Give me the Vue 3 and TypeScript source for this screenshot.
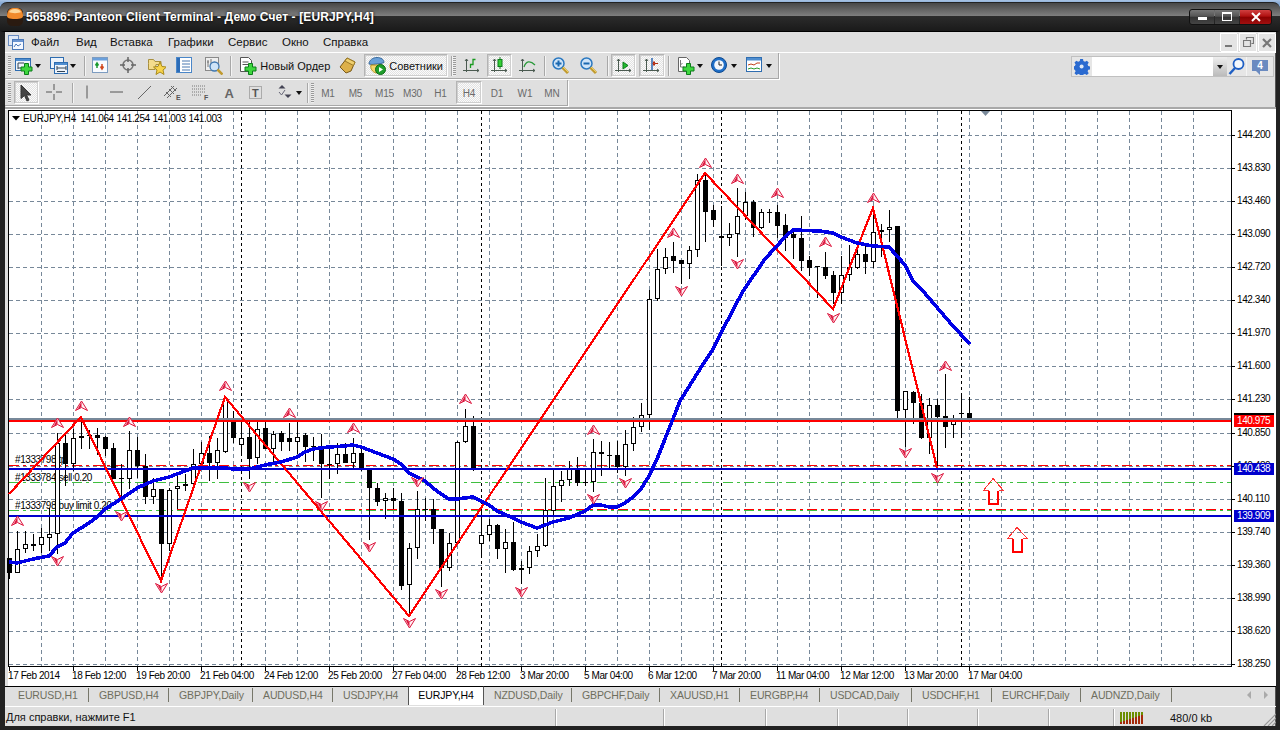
<script setup lang="ts">
type Item = { w: number; kind: 'sp' | 'sep' | 'grip' | 'btn'; icon?: string; arrow?: boolean; pressed?: boolean; text?: string; tf?: boolean; iw?: number }
const sp = (w: number): Item => ({ w, kind: 'sp' })
const SEP: Item = { w: 2, kind: 'sep' }
const GRIP: Item = { w: 3, kind: 'grip' }
const b = (w: number, icon: string, o: Partial<Item> = {}): Item => ({ w, kind: 'btn', icon, ...o })
const tf = (w: number, text: string, pressed = false): Item => ({ w, kind: 'btn', text, tf: true, pressed })

const plus = (x: number, y: number) => `<path d="M${x + 3.5} ${y + .5}h4v3.500h3.500v4h-3.500v3.500h-4v-3.500h-3.500v-4h3.500z" fill="#3ed63e" stroke="#0b7d1a"/>`
const axes = (c = '#4a5a50') => `<path d="M3.500 2v13M0 13.500h16M2 4l1.500-2 1.500 2M14 12l2 1.500-2 1.500" fill="none" stroke="${c}"/>`
const glass = (s: string) => `<circle cx="6.500" cy="6.500" r="5.500" fill="#cfe4f8" stroke="#2a78c0" stroke-width="1.500"/>${s}<path d="M10.500 10.500l5.500 5.500" stroke="#c09a30" stroke-width="3"/><path d="M11 10l5 5" stroke="#f0d060" stroke-width="1"/>`
const win = `<rect x=".5" y="1.500" width="15" height="12" fill="#eef4fb" stroke="#2f6db0"/><rect x="1" y="2" width="14" height="2" fill="#4f8ed0"/>`
const letter = (t: string, x: number, y: number, s: number, c = '#555', w = 700) => `<text x="${x}" y="${y}" font-family="Liberation Sans, Arial, sans-serif" font-size="${s}" font-weight="${w}" fill="${c}">${t}</text>`
const icons: Record<string, string> = {
  newchart: `${win}<path d="M3 6h6M3 6v6M3 11h7" fill="none" stroke="#345"/>${plus(6, 6)}`,
  profile: `<rect x=".5" y=".5" width="13" height="11" fill="#eef4fb" stroke="#2f6db0"/><rect x="4.500" y="5.500" width="13" height="11" fill="#eef4fb" stroke="#2f6db0"/><rect x="5" y="6" width="12" height="2" fill="#4f8ed0"/><path d="M7 11h9M7 9v4M16 9v4M7 14.500h8" fill="none" stroke="#345"/>`,
  market: `<rect x=".5" y=".5" width="15" height="15" fill="#f8fbff" stroke="#7d9cc0"/><rect x="1" y="1" width="14" height="2.500" fill="#6aa0dc"/><path d="M5 11V7M3.500 8.500L5 6l1.500 2.500" fill="none" stroke="#1a9a30" stroke-width="1.500"/><path d="M10 7v4M8.500 9.500L10 12l1.500-2.500" fill="none" stroke="#d04a20" stroke-width="1.500"/>`,
  nav: `<circle cx="8" cy="8" r="5" fill="none" stroke="#757575" stroke-width="1.500"/><path d="M8 0v5M8 11v5M0 8h5M11 8h5" stroke="#666" stroke-width="1.500"/>`,
  folder: `<path d="M.5 6.500v-4h5l1.500 2h6v3h-5l-1 5H.5z" fill="#f4dc8c" stroke="#a89040"/><path d="M12 5l2 4.500 4.500.5-3.500 3 1 4.500-4-2.500-4 2.500 1-4.500-3.500-3 4.500-.5z" fill="#f8d44c" stroke="#a88a1c"/>`,
  term: `<rect x=".5" y=".5" width="15" height="15" fill="#fff" stroke="#4a86c8"/><rect x="1" y="1" width="3" height="14" fill="#2b6cb8"/><path d="M6 4h8M6 7h8M6 10h8M6 13h8" stroke="#4a78b0"/>`,
  tester: `<rect x=".5" y=".5" width="13" height="13" fill="#efefef" stroke="#8a8a8a"/><path d="M3 3v7M2 5h2M6 2v6" stroke="#777"/><circle cx="9.500" cy="9.500" r="4.500" fill="#cfe4f8" stroke="#4078b0" stroke-width="1.300"/><path d="M12.500 12.500l5 5" stroke="#c09a30" stroke-width="2.500"/>`,
  order: `<path d="M1.500.5h8l3 3v11h-11z" fill="#fff" stroke="#555"/><path d="M3.500 5h6M3.500 7.500h6" stroke="#555"/>${plus(6, 6)}`,
  book: `<path d="M1 10L8 1l8 4-4 9-5 2z" fill="#dcb04a" stroke="#7a5a18"/><path d="M8 1l8 4-1.500 3.500L6 4z" fill="#f0d070" stroke="#9a7a28"/>`,
  sov: `<path d="M1 7c0-4 4-6.500 8-6.500s7 2 7 5l-3 1-9 1z" fill="#6aa0d8" stroke="#3a6a9c"/><path d="M3 8c-1 3 1 7 5 8l4-1 1-7z" fill="#f4d66a" stroke="#b09020"/><circle cx="12.500" cy="12.500" r="5" fill="#1f9e2c" stroke="#0c6a14"/><path d="M11 10v5l4-2.500z" fill="#fff"/>`,
  bar: `${axes()}<path d="M7.500 11V7.500H10V2.500h2.500" fill="none" stroke="#1a9a20" stroke-width="1.300"/>`,
  candle: `${axes()}<path d="M9 0v12" stroke="#1a7a20"/><rect x="7" y="2.500" width="4" height="7" fill="#35d035" stroke="#0b7d1a"/>`,
  line: `${axes()}<path d="M5 10c2-6 6-7 11-2" fill="none" stroke="#2a9a3a" stroke-width="1.300"/>`,
  zin: glass('<path d="M3.500 6.500h6M6.500 3.500v6" stroke="#1a68b0" stroke-width="2"/>'),
  zout: glass('<path d="M3.500 6.500h6" stroke="#1a68b0" stroke-width="2"/>'),
  scroll: `${axes()}<path d="M8 5v7l5-3.500z" fill="#22bb30" stroke="#0b7d1a"/>`,
  shift: `${axes()}<path d="M9 1v12" stroke="#2a64b0" stroke-width="1.500"/><path d="M15 6.500h-3l-1-2-1 2 1 2 1-2" fill="#d03a14" stroke="#b02a10"/>`,
  tmpl: `<path d="M1.500.5h8l3 3v11h-11z" fill="#fff" stroke="#666"/><path d="M3.500 3v7h4M3.500 8l2-2" fill="none" stroke="#777"/>${plus(6, 6)}`,
  clock: `<circle cx="8" cy="8" r="7.500" fill="#1f6fc8" stroke="#0f4a90"/><circle cx="8" cy="8" r="4.800" fill="#f4f8fc"/><path d="M8 4.500V8h3" fill="none" stroke="#222"/>`,
  ind: `<rect x=".5" y=".5" width="15" height="14" fill="#fff" stroke="#2f6db0"/><rect x="1" y="1" width="14" height="2.500" fill="#4f8ed0"/><path d="M2 8l3-1 3 1 3-2 3 0" fill="none" stroke="#c04018"/><path d="M2 12l3-1 3 1 3-1 3 1" fill="none" stroke="#2a9a2a"/>`,
  cursor: `<path d="M3 1v13.500l3.500-3 2.500 5.500 2-1-2.500-5h4.500z" fill="#444" stroke="#333"/>`,
  cross: `<path d="M8 0v6M8 10v6M0 8h6M10 8h6" stroke="#555"/>`,
  vline: `<path d="M8 1.500v13" stroke="#555"/>`,
  hline: `<path d="M2 8h13" stroke="#555"/>`,
  trend: `<path d="M2 15L15 2" stroke="#666"/>`,
  chan: `<path d="M0 12L10 2M3 14L13 4M2 8l5 5M5 5l5 5M7 2l5 5" stroke="#666"/>${letter('E', 12, 16, 7)}`,
  fibo: `<path d="M0 2h13M0 5h13M0 8h13M0 11h10" stroke="#777" stroke-dasharray="1 1"/>${letter('F', 12, 16, 7)}`,
  tbox: `<rect x="1.500" y="2.500" width="12" height="12" fill="none" stroke="#777" stroke-dasharray="1 1"/>${letter('T', 4, 13, 11)}`,
  atext: letter('A', 4.500, 14, 13, '#666'),
  arrows: `<path d="M6 1l3.500 3.500H2.500z" fill="#445"/><path d="M12 14l3.500-3.500h-7z" fill="#445"/><path d="M3 8l2.500 3L9 6" fill="none" stroke="#667"/>`,
}

const tb1: Item[] = [
  sp(3), GRIP, sp(3), b(29, 'newchart', { arrow: true }), b(41, 'profile', { arrow: true }), SEP,
  b(31, 'market'), b(25, 'nav'), b(30, 'folder'), b(26, 'term'), b(32, 'tester'), SEP,
  b(106, 'order', { text: 'Новый Ордер' }), b(20, 'book'), sp(6), b(84, 'sov', { text: 'Советники', pressed: true }), sp(3), SEP, sp(1), GRIP, sp(1),
  b(30, 'bar'), b(25, 'candle', { pressed: true }), b(32, 'line'), SEP, b(30, 'zin'), b(26, 'zout'), sp(5), SEP, sp(2),
  b(25, 'scroll', { pressed: true }), sp(3), b(26, 'shift', { pressed: true }), sp(3), SEP,
  b(39, 'tmpl', { arrow: true }), b(30, 'clock', { arrow: true }), b(39, 'ind', { arrow: true }),
]
const tb2: Item[] = [
  sp(3), GRIP, sp(3), b(25, 'cursor', { pressed: true }), b(31, 'cross'), sp(2), SEP,
  b(28, 'vline'), b(30, 'hline'), b(26, 'trend'), b(29, 'chan'), b(27, 'fibo'),
  b(29, 'atext'), b(28, 'tbox'), b(36, 'arrows', { arrow: true }), SEP, sp(2), GRIP,
  tf(28, 'M1'), tf(27, 'M5'), tf(31, 'M15'), tf(25, 'M30'), tf(31, 'H1'), tf(26, 'H4', true), tf(30, 'D1'), tf(26, 'W1'), tf(28, 'MN'),
]
const menu = [['Файл', 45], ['Вид', 34], ['Вставка', 58], ['Графики', 60], ['Сервис', 54], ['Окно', 41], ['Справка', 60]] as [string, number][]
const tabs: [string, number, boolean?][] = [
  ['EURUSD,H1', 81], ['GBPUSD,H4', 80], ['GBPJPY,Daily', 84], ['AUDUSD,H4', 80], ['USDJPY,H4', 76], ['EURJPY,H4', 76, true],
  ['NZDUSD,Daily', 88], ['GBPCHF,Daily', 88], ['XAUUSD,H1', 80], ['EURGBP,H4', 80], ['USDCAD,Daily', 92], ['USDCHF,H1', 80], ['EURCHF,Daily', 89], ['AUDNZD,Daily', 91],
]
const statusCells = [550, 108, 102, 72, 70, 70, 71, 65]

const raw: number[][] = [
  [557,578,557,572,0],[530,572,548,572,1],[530,552,543,548,1],[533,550,543,545,0],[527,552,536,544,1],[507,550,533,537,1],[432,553,442,533,1],[433,485,442,463,0],
  [428,470,437,463,1],[415,448,435,437,1],[429,448,434,435,0],[427,454,434,437,0],[435,455,436,448,0],[442,478,447,478,0],[463,495,477,478,0],[430,488,449,478,1],
  [436,477,449,465,0],[453,503,465,496,0],[477,503,488,496,1],[488,580,488,543,0],[487,550,489,543,1],[473,508,485,488,1],[473,490,483,485,1],[448,483,463,483,1],
  [441,468,452,463,1],[435,480,452,462,0],[437,478,449,462,1],[396,452,397,451,1],[410,442,421,437,0],[414,453,437,444,1],[420,478,436,458,0],[421,463,428,457,1],
  [420,448,427,448,0],[430,462,433,448,1],[430,450,432,441,0],[422,450,437,441,0],[420,453,436,441,1],[432,461,434,446,0],[436,460,445,446,0],[433,497,447,463,0],
  [445,478,463,464,0],[442,473,453,463,1],[442,462,453,462,0],[437,467,452,462,1],[445,470,452,469,0],[469,539,469,487,0],[482,505,487,501,0],[492,518,497,500,1],
  [487,508,497,500,0],[492,589,500,585,0],[542,615,547,584,1],[490,558,508,547,1],[497,520,508,509,0],[498,543,508,528,0],[528,586,528,567,0],[532,570,542,567,1],
  [440,543,441,542,1],[408,442,425,441,1],[415,470,425,469,0],[505,556,534,543,1],[518,540,524,534,1],[523,558,524,548,0],[528,572,541,548,1],[521,570,541,569,0],
  [560,583,567,569,1],[545,573,550,567,1],[533,556,545,550,1],[477,546,509,545,1],[468,514,485,510,1],[470,501,479,485,1],[460,485,468,479,1],[456,485,468,482,0],
  [468,485,481,482,0],[438,491,451,481,1],[440,475,451,453,0],[441,467,454,455,0],[440,472,454,466,0],[429,475,443,466,1],[416,450,426,443,1],[402,431,414,426,1],
  [289,429,298,414,1],[248,300,268,298,1],[247,273,256,268,1],[241,272,255,260,0],[259,283,259,263,0],[245,278,249,263,1],[173,256,179,249,1],[172,241,179,211,0],
  [204,226,209,219,0],[205,265,235,237,0],[222,245,233,237,1],[187,256,215,233,1],[191,219,201,215,1],[199,236,201,227,0],[208,228,211,227,1],[208,222,211,212,0],
  [204,237,211,225,0],[213,250,224,237,0],[228,258,233,237,0],[215,270,237,260,0],[255,275,259,267,0],[265,297,265,266,0],[251,278,266,275,0],[270,303,274,292,0],
  [255,303,274,292,1],[244,280,266,274,1],[242,268,253,267,1],[242,273,253,261,0],[208,267,231,261,1],[223,256,229,231,1],[209,241,226,229,1],[225,418,225,410,0],
  [390,446,390,409,1],[390,423,391,402,0],[393,438,402,437,0],[397,453,404,437,1],[398,467,404,416,0],[373,447,415,426,0],[414,437,419,424,1],[395,436,412,413,0],[396,419,412,419,0],
]
const candles = raw.map((r, i) => ({ x: 9 + 8 * i, h: r[0], l: r[1], t: r[2], b: r[3], up: r[4] === 1 }))

const xsV = Array.from({ length: 37 }, (_, i) => 41 + 32 * i)
const seps = [241, 481, 721, 961]
const prices = ['144.200', '143.830', '143.460', '143.090', '142.720', '142.340', '141.970', '141.600', '141.230', '140.850', '140.480', '140.110', '139.740', '139.360', '138.990', '138.620', '138.250']
const ysH = prices.map((p, i) => ({ p, y: Math.round(134 + 33.06 * i) }))
const dates = ['17 Feb 2014', '18 Feb 12:00', '19 Feb 20:00', '21 Feb 04:00', '24 Feb 12:00', '25 Feb 20:00', '27 Feb 04:00', '28 Feb 12:00', '3 Mar 20:00', '5 Mar 04:00', '6 Mar 12:00', '7 Mar 20:00', '11 Mar 04:00', '12 Mar 12:00', '13 Mar 20:00', '17 Mar 04:00']
const zig = '9,493 81,416 161,580 225,396 409,615 705,172 833,308 873,207 937,467'
const ma = '9,561 17,562 25,560 33,558 49,555 57,546 65,542 73,532 89,522 97,516 105,508 121,498 137,487 153,480 169,476 185,470 193,467 209,467 225,467 233,468 249,468 265,464 281,461 297,456 305,451 313,448 329,446 345,445 353,444 361,446 369,449 393,458 401,463 409,472 425,480 433,487 441,493 449,498 457,498 473,496 481,500 489,504 497,510 513,517 521,521 537,527 545,524 553,521 569,517 585,510 593,504 601,504 609,506 617,506 625,502 633,496 641,488 649,475 657,458 665,438 680,400 700,368 712,350 722,330 743,290 765,258 775,247 786,235 793,229 820,230 833,232 841,236 849,239 857,242 873,245 889,246 897,255 905,264 913,280 923,290 940,310 953,325 970,343'
const ups = [[17,520],[57,422],[81,405],[129,421],[225,385],[289,412],[353,427],[465,398],[593,429],[673,232],[705,162],[737,178],[777,192],[825,241],[873,197],[945,365]]
const downs = [[57,560],[121,515],[161,587],[249,486],[321,505],[369,546],[417,481],[441,593],[409,622],[521,591],[593,498],[625,482],[681,290],[737,263],[833,317],[905,452],[937,477]]
const bars = Array.from({ length: 8 }, (_, i) => i)
</script>

<template>
  <div class="win">
    <header class="title">
      <svg class="appicon" width="16" height="18" viewBox="0 0 16 18">
        <rect x="0" y="0" width="16" height="18" rx="5" fill="#2a1a10" />
        <path d="M0 8c0-4 2-8 6-8h4c4 0 6 4 6 8 0 2-2 3-8 3s-8-1-8-3z" fill="#f08a2c" />
        <path d="M2 4c1-2 3-3 6-3s5 1 6 3c-2 1.500-10 1.500-12 0z" fill="#fcd69a" />
      </svg>
      <span class="ttext">565896: Panteon Client Terminal - Демо Счет - [EURJPY,H4]</span>
      <div class="caps">
        <span class="cap"><i class="cmin"></i></span>
        <span class="cap"><i class="cmax"></i></span>
        <span class="cap cclose">
          <svg width="12" height="10" viewBox="0 0 12 10"><path d="M2 1l8 8M10 1L2 9" stroke="#fff" stroke-width="2" /></svg>
        </span>
      </div>
    </header>

    <div class="client">
      <nav class="menu">
        <svg class="mdi" width="16" height="15" viewBox="0 0 16 15">
          <rect x=".5" y=".5" width="10" height="10" fill="#dfe9f7" stroke="#6a8cc0" />
          <rect x="4.500" y="4.500" width="11" height="10" fill="#f4f8ff" stroke="#4a78b8" />
          <rect x="5" y="5" width="10" height="2" fill="#6a94d0" />
          <path d="M6 12l2-3 2 2 3-2" fill="none" stroke="#4a78b8" />
        </svg>
        <span v-for="m in menu" :key="m[0]" class="mi" :style="{ width: m[1] + 'px' }">{{ m[0] }}</span>
        <div class="mdibtns">
          <span class="mb"><svg width="10" height="10" viewBox="0 0 10 10"><path d="M1 8h7" stroke="#777" stroke-width="2" /></svg></span>
          <span class="mb"><svg width="11" height="11" viewBox="0 0 11 11"><path d="M3.500 2.500v-2h7v6h-2M.5 3.500h7v6h-7z" fill="none" stroke="#777" stroke-width="1.200" /></svg></span>
          <span class="mb"><svg width="10" height="10" viewBox="0 0 10 10"><path d="M1 1l8 8M9 1L1 9" stroke="#777" stroke-width="2.200" /></svg></span>
        </div>
      </nav>

      <div class="row row1">
        <div class="tb">
          <template v-for="(it, i) in tb1" :key="i">
            <span v-if="it.kind === 'sp'" :style="{ width: it.w + 'px' }"></span>
            <span v-else-if="it.kind === 'sep'" class="sep"></span>
            <span v-else-if="it.kind === 'grip'" class="grip"></span>
            <span v-else class="btn" :class="{ pressed: it.pressed }" :style="{ width: it.w + 'px' }">
              <svg width="18" height="18" viewBox="0 0 18 18" v-html="icons[it.icon!]"></svg>
              <span v-if="it.text" class="btext">{{ it.text }}</span>
              <i v-if="it.arrow" class="arr"></i>
            </span>
          </template>
        </div>
        <div class="search">
          <span class="gear">
            <svg width="16" height="16" viewBox="0 0 16 16">
              <path d="M6.500 0h3l.4 2.200 1.700.8 1.900-1.200 2 2-1.200 1.900.7 1.700 2 .5v3l-2 .4-.7 1.700 1.200 1.900-2 2-1.900-1.200-1.700.7-.4 2h-3l-.4-2-1.700-.7-1.900 1.200-2-2 1.200-1.900-.8-1.700-2-.4v-3l2-.5.8-1.700-1.200-1.900 2-2 1.900 1.200 1.700-.8z" fill="#2a6ad0" transform="scale(.95)" />
              <circle cx="7.600" cy="7.600" r="2" fill="#dfe9f7" />
            </svg>
          </span>
          <span class="sinput"></span>
          <span class="sdrop"><i class="arr"></i></span>
          <span class="smag">
            <svg width="17" height="18" viewBox="0 0 17 18"><circle cx="10.500" cy="6" r="5" fill="#f4f8fc" stroke="#1f5fc4" stroke-width="1.800" /><path d="M7 10l-5.500 6" stroke="#1f5fc4" stroke-width="2.500" /></svg>
          </span>
          <span class="schat">
            <span class="bubble">4</span>
          </span>
        </div>
      </div>

      <div class="row row2">
        <div class="tb">
          <template v-for="(it, i) in tb2" :key="i">
            <span v-if="it.kind === 'sp'" :style="{ width: it.w + 'px' }"></span>
            <span v-else-if="it.kind === 'sep'" class="sep"></span>
            <span v-else-if="it.kind === 'grip'" class="grip"></span>
            <span v-else class="btn" :class="{ pressed: it.pressed, tf: it.tf }" :style="{ width: it.w + 'px' }">
              <svg v-if="it.icon" width="18" height="18" viewBox="0 0 18 18" v-html="icons[it.icon]"></svg>
              <span v-if="it.text">{{ it.text }}</span>
              <i v-if="it.arrow" class="arr"></i>
            </span>
          </template>
        </div>
      </div>

      <div class="chart">
        <svg width="1271" height="579" viewBox="5 106 1271 579" class="plot">
          <rect x="5" y="106" width="1271" height="579" fill="#fff" />
          <rect x="5" y="106" width="3" height="579" fill="#dfdfdf" />
          <rect x="5" y="106" width="1271" height="2" fill="#a8a8a8" />
          <rect x="5" y="108" width="1271" height="1" fill="#fff" />

          <g shape-rendering="crispEdges">
            <rect x="8.500" y="109.500" width="1223" height="556" fill="#fff" stroke="#000" />
            <g stroke="#778899" stroke-dasharray="4 3" fill="none">
              <path v-for="x in xsV" :key="x" :d="`M${x + .5} 110V665`" />
              <path v-for="g in ysH" :key="g.y" :d="`M9 ${g.y + .5}H1231`" />
            </g>
            <path v-for="x in seps" :key="'s' + x" :d="`M${x + .5} 110V665`" stroke="#000" stroke-dasharray="3 3" fill="none" />

            <g stroke-width="1" fill="none" stroke-dasharray="10 4 3 4">
              <path d="M9 464.500H1231" stroke="#f00" />
              <path d="M9 481.500H1231" stroke="#3fbf3f" />
              <path d="M9 509.500H1231" stroke="#3fbf3f" />
              <path d="M177 508.500H1231" stroke="#f00" />
            </g>
          </g>

          <g class="ctext">
            <text x="15" y="462">#1333798 tp</text>
            <text x="15" y="480">#1333784 sell 0.20</text>
            <text x="15" y="508">#1333798 buy limit 0.20</text>
          </g>

          <g shape-rendering="crispEdges">
            <g v-for="c in candles" :key="c.x">
              <rect :x="c.x" :y="c.h" width="1" :height="c.l - c.h" fill="#000" />
              <rect :x="c.x - 2" :y="c.t" width="5" :height="Math.max(1, c.b - c.t)" fill="#000" />
              <rect v-if="c.up && c.b - c.t > 2" :x="c.x - 1" :y="c.t + 1" width="3" :height="c.b - c.t - 2" fill="#fff" />
            </g>
            <rect x="9" y="417" width="1222" height="2" fill="#778899" />
            <rect x="9" y="419" width="1222" height="2" fill="#f00" />
            <rect x="9" y="467" width="1222" height="2" fill="#0000cd" />
            <rect x="9" y="514" width="1222" height="2" fill="#0000cd" />
            <polyline :points="zig" fill="none" stroke="#f00" stroke-width="2.200" />
            <polyline :points="ma" fill="none" stroke="#0000e6" stroke-width="3.600" stroke-linejoin="round" />
          </g>

          <g v-for="u in ups" :key="'u' + u[0] + u[1]" :transform="`translate(${u[0] + .5} ${u[1]})`">
            <path d="M0-5L6 4.500 0 1.500-6 4.500Z" fill="#fff0f3" stroke="#dc143c" />
            <path d="M0-4L-4 3.200 0 1Z" fill="#dc143c" />
          </g>
          <g v-for="d in downs" :key="'d' + d[0] + d[1]" :transform="`translate(${d[0] + .5} ${d[1]})`">
            <path d="M0 5L6-4.500 0-1.500-6-4.500Z" fill="#fff0f3" stroke="#dc143c" />
            <path d="M0 4L-4-3.200 0-1Z" fill="#dc143c" />
          </g>

          <path d="M985.500 115l-4.500-5h9z" fill="#7a8a9a" />
          <g shape-rendering="crispEdges" fill="none" stroke="#f00">
            <path d="M988.500 489.500h-5l9.500-12 10.500 12h-5" stroke-width="1" stroke="#f33" />
            <path d="M989 489.500v13h9v-13" stroke-width="2" />
            <path d="M1012.500 537.500h-5l9.500-11 10.500 11h-5" stroke-width="1" stroke="#f33" />
            <path d="M1013 537.500v13h9v-13" stroke-width="2" />
          </g>

          <path d="M12 115h8l-4 4.500z" fill="#000" />
          <text y="121" class="ctext hdr"><tspan x="23" class="hname">EURJPY,H4</tspan><tspan x="80.500">141.064</tspan><tspan x="116.500">141.254</tspan><tspan x="152.500">141.003</tspan><tspan x="188.500">141.003</tspan></text>

          <g shape-rendering="crispEdges" stroke="#000">
            <path v-for="g in ysH" :key="'t' + g.y" :d="`M1231 ${g.y + .5}h4`" />
            <path v-for="(d, i) in dates" :key="'x' + i" :d="`M${9 + 64 * i + .5} 665v5`" />
          </g>
          <text v-for="g in ysH" :key="'l' + g.y" x="1237" :y="g.y + 3" class="ctext">{{ g.p }}</text>
          <text v-for="(d, i) in dates" :key="d" :x="8 + 64 * i" y="678" class="ctext">{{ d }}</text>

          <g shape-rendering="crispEdges">
            <rect x="1234" y="412" width="40" height="2" fill="#000" />
            <rect x="1234" y="414" width="40" height="12" fill="#f00" />
            <rect x="1234" y="462" width="40" height="12" fill="#0000cd" />
            <rect x="1234" y="509" width="40" height="12" fill="#0000cd" />
          </g>
          <g class="ctext ptag">
            <text x="1237" y="423">140.975</text>
            <text x="1237" y="471">140.438</text>
            <text x="1237" y="518">139.909</text>
          </g>
        </svg>
      </div>

      <div class="tabs">
        <span v-for="t in tabs" :key="t[0]" class="tab" :class="{ active: t[2] }" :style="{ width: t[1] + 'px' }">{{ t[0] }}</span>
        <span class="tabnav">
          <svg width="21" height="12" viewBox="0 0 21 12"><path d="M4 2v8L0 6zM17 2v8l4-4z" fill="#aaa" /></svg>
        </span>
      </div>

      <footer class="status">
        <span v-for="(w, i) in statusCells" :key="i" class="cell" :style="{ width: w + 'px' }">
          <template v-if="i === 0">Для справки, нажмите F1</template>
        </span>
        <svg class="conn" width="23" height="12" viewBox="0 0 23 12" shape-rendering="crispEdges">
          <g v-for="i in bars" :key="i">
            <rect :x="i * 3" y="0" width="2" :height="12" fill="#6b8e00" />
            <rect :x="i * 3" :y="10 - i" width="2" :height="2 + i" fill="#a52a0a" />
          </g>
        </svg>
        <span class="kb">480/0 kb</span>
        <svg class="resize" width="14" height="14" viewBox="0 0 14 14"><path d="M14 2L2 14M14 6L6 14M14 10L10 14" stroke="#999" stroke-width="1.200" /></svg>
      </footer>
    </div>
  </div>
</template>

<style>
html, body { margin: 0; padding: 0; overflow: hidden; }
</style>

<style scoped>
.win {
  width: 1280px; height: 730px; overflow: hidden; box-sizing: border-box;
  background: linear-gradient(#a9c4e4, #88aad4 3px);
  display: flex; flex-direction: column;
  font-family: "Liberation Sans", Arial, sans-serif; font-size: 11.5px; color: #111;
}
.title {
  height: 29px; margin-top: 2px; flex: none; display: flex; align-items: center; position: relative;
  border-radius: 7px 7px 0 0; border-top: 1px solid #222; box-sizing: border-box;
  background: linear-gradient(#474747, #7f7f7f 13px, #2c2c2c 13px, #1a1a1a 100%);
  padding-left: 7px;
}
.appicon { flex: none; }
.ttext {
  margin-left: 3px; color: #fff; font-weight: 700; font-size: 12px; letter-spacing: .12px; white-space: pre;
  text-shadow: 0 0 3px #000;
}
.caps {
  margin-left: auto; margin-right: 9px; margin-top: -1px; display: flex; gap: 1px; height: 14px;
  outline: 1px solid #111; border-radius: 2px;
}
.cap {
  width: 24px; display: flex; align-items: center; justify-content: center;
  background: linear-gradient(#777, #555 45%, #333 50%, #444);
}
.cclose { width: 31px; background: linear-gradient(#d04040, #b01010 45%, #8a0000 50%, #a01010); }
.cmin { width: 9px; height: 3px; background: #fff; margin-top: 4px; }
.cmax { width: 8px; height: 6px; border: 1px solid #fff; border-top-width: 2px; }
.client {
  flex: 1; min-height: 0; display: flex; flex-direction: column; background: #dfdfdf;
  border: solid #222; border-width: 0 4px 4px 5px; border-top: 1px solid #000;
  box-shadow: -1px 0 0 #555 inset;
}
.menu {
  height: 20px; flex: none; display: flex; align-items: center; border-bottom: 1px solid #fff;
  background: #dfdfdf; box-sizing: content-box;
}
.mdi { margin-left: 3px; margin-right: 7px; flex: none; }
.mi { flex: none; white-space: nowrap; margin-top: -1px; }
.mdibtns { margin-left: auto; display: flex; gap: 2px; margin-right: 1px; }
.mb {
  width: 16px; height: 17px; display: flex; align-items: center; justify-content: center;
  border: solid #fff; border-width: 1px 0 0 1px; outline: 0;
  box-shadow: 1px 1px 0 #fff;
  background: #e4e4e4;
}
.row { height: 27px; flex: none; display: flex; align-items: stretch; }
.row1 { height: 27px; }
.tb {
  display: flex; align-items: center; height: 26px; box-sizing: border-box;
  border-right: 1px solid #a8a8a8; border-bottom: 1px solid #a8a8a8;
  box-shadow: 1px 1px 0 #fff;
}
.row1 .tb { width: 774px; }
.row2 .tb { width: 563px; }
.sep { width: 1px; height: 20px; background: #a8a8a8; border-right: 1px solid #f4f4f4; flex: none; }
.grip {
  width: 3px; height: 20px; flex: none;
  background: repeating-linear-gradient(#999 0 1px, #eee 1px 2px);
}
.btn {
  flex: none; height: 23px; display: flex; align-items: center; justify-content: center; gap: 3px;
  box-sizing: border-box; white-space: nowrap; font-size: 11px;
}
.pressed {
  border: 1px solid; border-color: #b4b4b4 #fff #fff #b4b4b4;
  outline: 1px solid #cfcfcf; outline-offset: -2px;
  background: repeating-conic-gradient(#fbfbfb 0 25%, #e2e2e2 0 50%) 0 0 / 2px 2px;
}
.btext { color: #111; }
.tf { color: #6a6a6a; font-size: 10px; letter-spacing: -.1px; padding-top: 1px; }
.arr { width: 0; height: 0; border: 3px solid transparent; border-top: 4px solid #111; border-bottom: 0; flex: none; margin-left: -1px; }
.search {
  margin-left: auto; margin-right: 2px; margin-top: 3px; height: 21px; width: 203px; display: flex;
  box-sizing: border-box; border: 1px solid #c0c0c0; background: #e6e6e6;
}
.gear { width: 20px; display: flex; align-items: center; justify-content: center; flex: none; }
.sinput { width: 121px; background: #fff; flex: none; }
.sdrop {
  width: 14px; display: flex; align-items: center; justify-content: center; flex: none;
  background: linear-gradient(#eee, #bbb);
}
.smag { width: 19px; display: flex; align-items: center; justify-content: center; flex: none; }
.schat { flex: 1; display: flex; align-items: center; justify-content: center; border-left: 1px solid #f4f4f4; }
.bubble {
  position: relative; width: 16px; height: 11px; background: #6a8ac0; color: #fff; font-weight: 700; font-size: 10px;
  line-height: 11px; text-align: center; margin-top: -3px;
}
.bubble::after {
  content: ""; position: absolute; left: 4px; bottom: -4px; width: 0; height: 0;
  border-top: 4px solid #6a8ac0; border-left: 4px solid transparent;
}
.chart { height: 579px; flex: none; }
.plot { display: block; }
.ctext { font-family: "Liberation Sans", Arial, sans-serif; font-size: 10px; letter-spacing: -.42px; fill: #000; white-space: pre; }
.hname { letter-spacing: -.05px; }
.ptag { fill: #fff; font-weight: 400; }
.ptag text { fill: #fff; }
.tabs {
  flex: none; display: flex; align-items: center; padding-left: 3px; padding-bottom: 3px;
  border-top: 1px solid #000; border-bottom: 1px solid #fff; box-sizing: border-box; position: relative;
  height: 21px;
}
.tab {
  flex: none; height: 14px; line-height: 14px; padding-left: 10px; box-sizing: border-box; color: #6e6e5e;
  border-right: 1px solid #77776a; font-size: 10.5px; letter-spacing: -.12px; white-space: nowrap;
}
.tab.active {
  height: 19px; line-height: 17px; align-self: flex-start; margin-top: -1px; background: #fff; color: #000; text-align: center; padding-left: 0;
  border: 1px solid #555; border-top: 1px solid #000; border-bottom: 0; margin-left: -1px; position: relative;
}
.tabnav { margin-left: auto; margin-right: 8px; display: flex; }
.status { flex: 1; display: flex; align-items: center; padding: 2px 0 0 1px; font-size: 11px; position: relative; min-height: 0; box-sizing: border-box; }
.cell { flex: none; height: 17px; line-height: 17px; box-sizing: border-box; border-right: 1px solid #a8a8a8; box-shadow: 1px 0 0 #fff; white-space: nowrap; }
.conn { margin-left: 6px; flex: none; }
.kb { margin-left: 27px; }
.resize { position: absolute; right: 0; bottom: 0; }
</style>
